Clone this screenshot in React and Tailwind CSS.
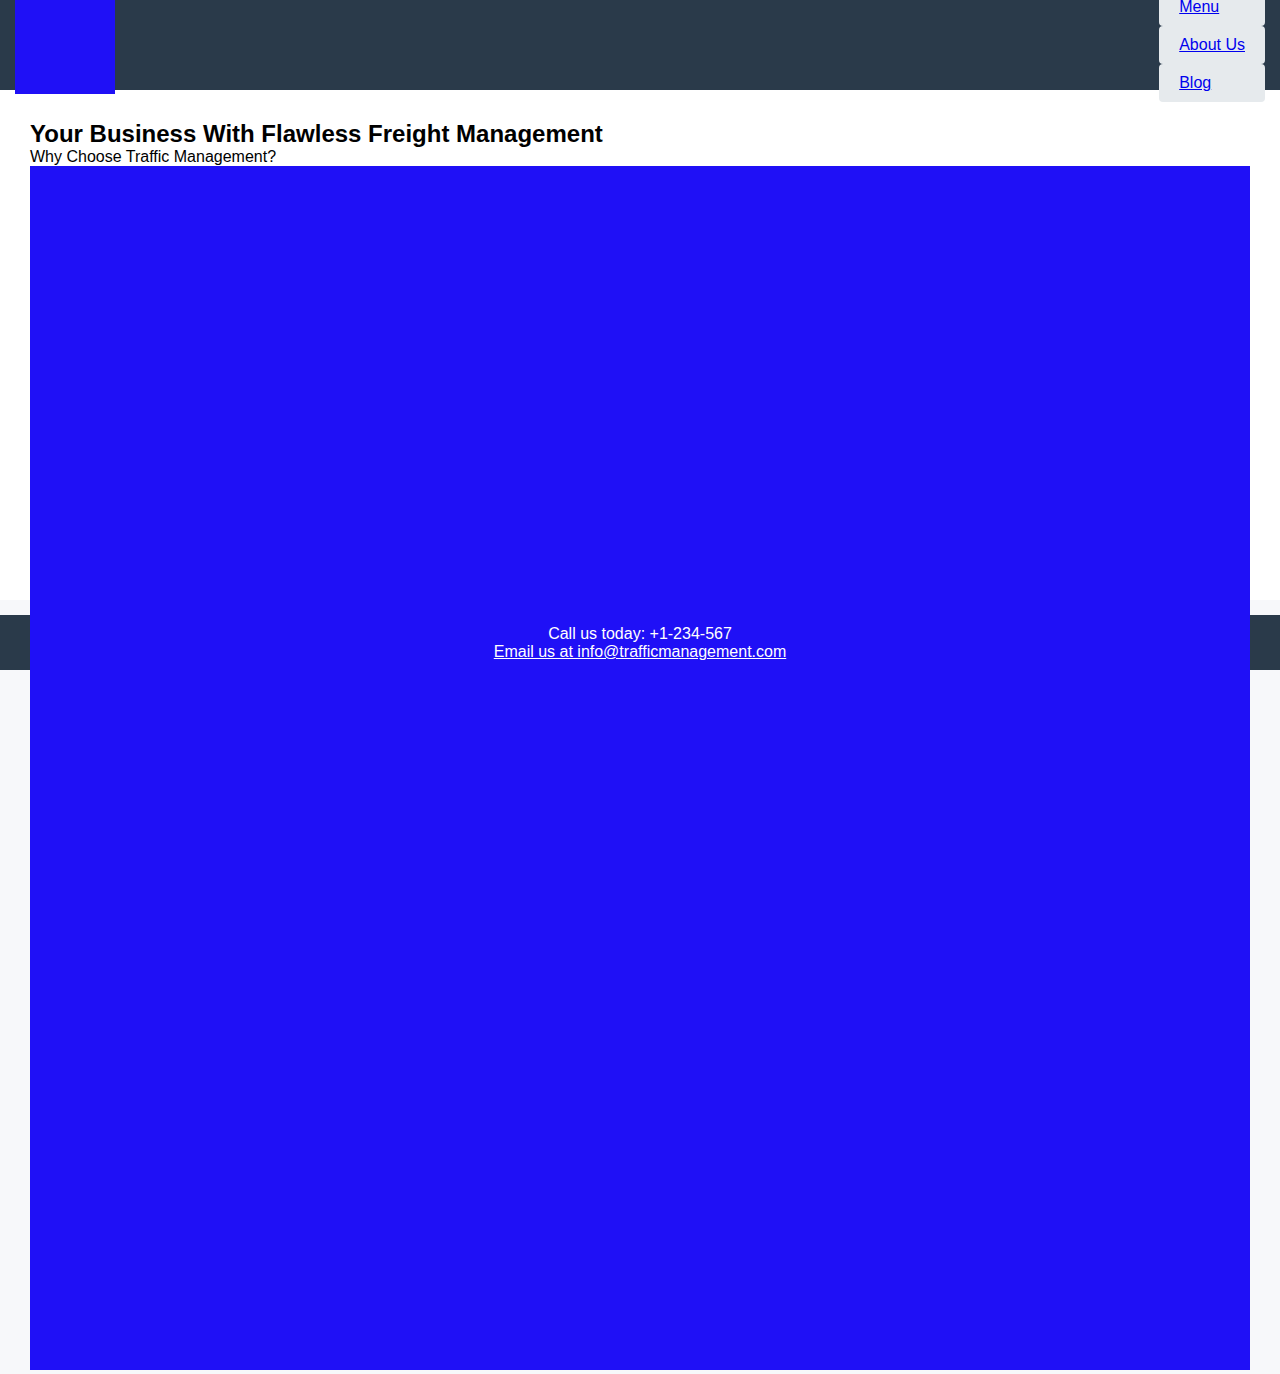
import React from 'react';

const navLinks = ['Menu', 'About Us', 'Blog'];

const App = () => {
  return (
    <div className="min-h-[1374px] bg-[#f7f8fa] font-['Liberation_Sans',Arial,sans-serif] text-black">
      {/* Header */}
      <header className="relative z-10 flex h-[90px] items-center justify-between bg-[#2a3a4a] px-[15px]">
        <div className="h-[98px] w-[100px] bg-[#1f10f6]" />
        <ul className="flex flex-col">
          {navLinks.map(link => (
            <li key={link} className="rounded-[4px] bg-[#e6eaed] px-5 py-[10px] text-base leading-[normal]">
              <a href="#" className="text-[#0000ee] underline">
                {link}
              </a>
            </li>
          ))}
        </ul>
      </header>

      {/* Main */}
      <main className="h-[510px] bg-white px-[30px] pt-[30px]">
        <h1 className="text-2xl font-bold leading-[normal]">Your Business With Flawless Freight Management</h1>
        <p className="text-base leading-[normal]">Why Choose Traffic Management?</p>
        <div className="inline-block h-[1204px] w-full align-top bg-[#1f10f6]" />
      </main>

      {/* Footer */}
      <footer className="mt-[15px] bg-[#2a3a4a] pt-[10px] pb-[9px] text-center text-base leading-[normal] text-white">
        <p>Call us today: +1-234-567</p>
        <a href="#" className="underline">
          Email us at info@trafficmanagement.com
        </a>
      </footer>
    </div>
  );
};

export default App;
